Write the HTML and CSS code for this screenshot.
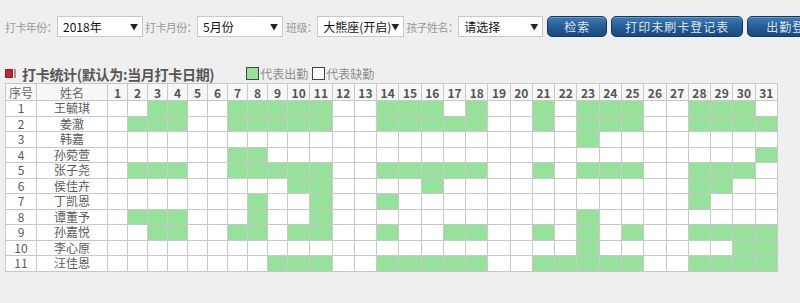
FILE: index.html
```html
<!DOCTYPE html>
<html>
	<head>
		<meta charset="UTF-8">
		<title>打卡统计</title>
		<link rel="stylesheet" href="styles.css">
	</head>
	<body>
		<div class="toolbar">
			<label class="lbl">打卡年份：</label>
			<div class="sel sel-year">2018年<span class="arrow">▼</span></div>
			<label class="lbl">打卡月份：</label>
			<div class="sel sel-month">5月份<span class="arrow">▼</span></div>
			<label class="lbl">班级：</label>
			<div class="sel sel-class">大熊座(开启)<span class="arrow">▼</span></div>
			<label class="lbl">孩子姓名：</label>
			<div class="sel sel-kid">请选择<span class="arrow">▼</span></div>
			<button class="btn btn-search">检索</button>
			<button class="btn btn-print">打印未刷卡登记表</button>
			<button class="btn btn-out">出勤登记表</button>
		</div>

		<div class="title-row">
			<span class="mark"></span><span class="mark-bar"></span>
			<h3 class="title">打卡统计(默认为:当月打卡日期)</h3>
			<span class="legend legend-on"><span class="box box-on"></span>代表出勤</span>
			<span class="legend legend-off"><span class="box"></span>代表缺勤</span>
		</div>

		<table class="grid">
			<colgroup>
				<col class="c-no"><col class="c-name">
				<col class="c-s"><col class="c-s"><col class="c-s"><col class="c-s"><col class="c-s"><col class="c-s"><col class="c-s"><col class="c-s"><col class="c-s">
			</colgroup>
			<thead>
				<tr>
					<th class="h-txt">序号</th><th class="h-txt">姓名</th>
					<th>1</th><th>2</th><th>3</th><th>4</th><th>5</th><th>6</th><th>7</th><th>8</th><th>9</th><th>10</th>
					<th>11</th><th>12</th><th>13</th><th>14</th><th>15</th><th>16</th><th>17</th><th>18</th><th>19</th><th>20</th>
					<th>21</th><th>22</th><th>23</th><th>24</th><th>25</th><th>26</th><th>27</th><th>28</th><th>29</th><th>30</th><th>31</th>
				</tr>
			</thead>
			<tbody>
				<tr><td>1</td><td>王毓琪</td>
					<td></td><td></td><td class="on"></td><td class="on"></td><td></td><td></td><td class="on"></td><td class="on"></td><td class="on"></td><td class="on"></td>
					<td class="on"></td><td></td><td></td><td class="on"></td><td class="on"></td><td class="on"></td><td></td><td class="on"></td><td></td><td></td>
					<td class="on"></td><td></td><td class="on"></td><td class="on"></td><td class="on"></td><td></td><td></td><td class="on"></td><td class="on"></td><td class="on"></td><td></td></tr>
				<tr><td>2</td><td>姜澈</td>
					<td></td><td class="on"></td><td class="on"></td><td class="on"></td><td></td><td></td><td class="on"></td><td class="on"></td><td class="on"></td><td class="on"></td>
					<td class="on"></td><td></td><td></td><td class="on"></td><td class="on"></td><td class="on"></td><td class="on"></td><td class="on"></td><td></td><td></td>
					<td class="on"></td><td></td><td class="on"></td><td class="on"></td><td class="on"></td><td></td><td></td><td class="on"></td><td class="on"></td><td class="on"></td><td class="on"></td></tr>
				<tr><td>3</td><td>韩嘉</td>
					<td></td><td></td><td></td><td></td><td></td><td></td><td></td><td></td><td></td><td></td>
					<td></td><td></td><td></td><td></td><td></td><td></td><td></td><td></td><td></td><td></td>
					<td></td><td></td><td class="on"></td><td></td><td></td><td></td><td></td><td></td><td></td><td></td><td></td></tr>
				<tr><td>4</td><td>孙菀萱</td>
					<td></td><td></td><td></td><td></td><td></td><td></td><td class="on"></td><td class="on"></td><td></td><td></td>
					<td></td><td></td><td></td><td></td><td></td><td></td><td></td><td></td><td></td><td></td>
					<td></td><td></td><td></td><td></td><td></td><td></td><td></td><td></td><td></td><td></td><td class="on"></td></tr>
				<tr><td>5</td><td>张子尧</td>
					<td></td><td class="on"></td><td class="on"></td><td class="on"></td><td></td><td></td><td class="on"></td><td class="on"></td><td class="on"></td><td class="on"></td>
					<td class="on"></td><td></td><td></td><td class="on"></td><td class="on"></td><td class="on"></td><td class="on"></td><td class="on"></td><td></td><td></td>
					<td class="on"></td><td></td><td class="on"></td><td class="on"></td><td class="on"></td><td></td><td></td><td class="on"></td><td class="on"></td><td class="on"></td><td></td></tr>
				<tr><td>6</td><td>侯佳卉</td>
					<td></td><td></td><td></td><td></td><td></td><td></td><td></td><td></td><td></td><td class="on"></td>
					<td class="on"></td><td></td><td></td><td></td><td></td><td class="on"></td><td></td><td></td><td></td><td></td>
					<td></td><td></td><td></td><td></td><td></td><td></td><td></td><td class="on"></td><td class="on"></td><td></td><td></td></tr>
				<tr><td>7</td><td>丁凯恩</td>
					<td></td><td></td><td></td><td></td><td></td><td></td><td></td><td class="on"></td><td></td><td></td>
					<td class="on"></td><td></td><td></td><td class="on"></td><td></td><td></td><td></td><td></td><td></td><td></td>
					<td></td><td></td><td></td><td></td><td></td><td></td><td></td><td class="on"></td><td></td><td></td><td></td></tr>
				<tr><td>8</td><td>谭董予</td>
					<td></td><td class="on"></td><td class="on"></td><td class="on"></td><td></td><td></td><td></td><td class="on"></td><td></td><td></td>
					<td class="on"></td><td></td><td></td><td></td><td></td><td></td><td></td><td></td><td></td><td></td>
					<td></td><td></td><td class="on"></td><td></td><td></td><td></td><td></td><td></td><td></td><td></td><td></td></tr>
				<tr><td>9</td><td>孙嘉悦</td>
					<td></td><td></td><td class="on"></td><td class="on"></td><td></td><td></td><td class="on"></td><td class="on"></td><td></td><td class="on"></td>
					<td class="on"></td><td></td><td></td><td class="on"></td><td></td><td></td><td class="on"></td><td class="on"></td><td></td><td></td>
					<td class="on"></td><td></td><td class="on"></td><td></td><td class="on"></td><td></td><td></td><td class="on"></td><td class="on"></td><td class="on"></td><td class="on"></td></tr>
				<tr><td>10</td><td>李心原</td>
					<td></td><td></td><td></td><td></td><td></td><td></td><td></td><td></td><td></td><td></td>
					<td></td><td></td><td></td><td></td><td></td><td></td><td></td><td></td><td></td><td></td>
					<td></td><td></td><td class="on"></td><td></td><td></td><td></td><td></td><td></td><td></td><td class="on"></td><td class="on"></td></tr>
				<tr><td>11</td><td>汪佳恩</td>
					<td></td><td></td><td></td><td></td><td></td><td></td><td></td><td></td><td class="on"></td><td class="on"></td>
					<td class="on"></td><td></td><td></td><td class="on"></td><td class="on"></td><td class="on"></td><td class="on"></td><td class="on"></td><td></td><td></td>
					<td class="on"></td><td class="on"></td><td class="on"></td><td class="on"></td><td class="on"></td><td></td><td></td><td class="on"></td><td class="on"></td><td class="on"></td><td class="on"></td></tr>
			</tbody>
		</table>
	</body>
</html>
```

FILE: styles.css
```css
body { margin: 0; background: #efefef; font-family: "Noto Sans CJK SC", "Liberation Sans", sans-serif; font-size: 12px; color: #555; overflow: hidden; }

.toolbar { display: flex; align-items: center; padding: 16px 0 0 5px; white-space: nowrap; overflow: hidden; }
.toolbar > * { flex: none; }
.lbl { color: #9a9a9a; font-size: 11px; letter-spacing: -0.6px; }
.sel { position: relative; box-sizing: border-box; height: 21px; line-height: 19px; padding-left: 5px; margin-right: 2px; background: #fff; border: 1px solid #c9c9c9; color: #111; font-size: 12px; }
.sel .arrow { position: absolute; right: 4px; top: 0; font-size: 8px; color: #222; }
.sel-year { width: 86px; }
.sel-month { width: 86px; margin-right: 3px; }
.sel-class { width: 87px; }
.sel-kid { width: 85px; }
.btn { box-sizing: border-box; height: 21px; margin-left: 4px; padding: 0; border: 1px solid #14375e; border-radius: 5px; background: linear-gradient(#3f7dba, #245a92 55%, #1a4a7c); color: #d9e5f2; font-family: inherit; font-size: 12px; letter-spacing: 1px; box-shadow: inset 0 1px 0 rgba(255,255,255,0.25); }
.btn-search { width: 60px; margin-left: 2px; }
.btn-print { width: 132px; }
.btn-out { width: 132px; text-align: left; padding-left: 18px; }

.title-row { display: flex; align-items: center; margin: 28px 0 1px 5px; height: 17px; }
.mark { width: 8px; height: 9px; background: #c1272d; border: 1px solid #9e1c20; box-sizing: border-box; }
.mark-bar { width: 2px; height: 9px; margin-left: 1px; background: #9b9b9b; }
.title { margin: 0 0 0 6px; font-size: 14px; font-weight: bold; color: #575757; letter-spacing: -0.3px; }
.legend { display: flex; align-items: center; color: #8d8d8d; font-size: 12px; }
.legend-on { margin-left: 32px; }
.legend-off { margin-left: 4px; }
.box { width: 13px; height: 13px; box-sizing: border-box; border: 1px solid #444; background: #fff; margin-right: 1px; }
.box-on { background: #97e29a; }

.grid { table-layout: fixed; width: 773px; margin-left: 5px; border-collapse: collapse; background: #fff; }
.c-no { width: 31px; }
.c-name { width: 71px; }
.c-s { width: 20px; }
.grid th, .grid td { padding: 0; border: 1px solid #c8c8c8; text-align: center; overflow: hidden; white-space: nowrap; }
.grid th { height: 16px; line-height: 15px; background: #f7f7f7; font-weight: bold; color: #555; font-size: 12px; }
.grid th.h-txt { font-weight: normal; color: #666; }
.grid td { height: 14.5px; line-height: 14px; color: #5a5a5a; font-size: 12px; }
.grid td.on { background: #97e29a; }
```
